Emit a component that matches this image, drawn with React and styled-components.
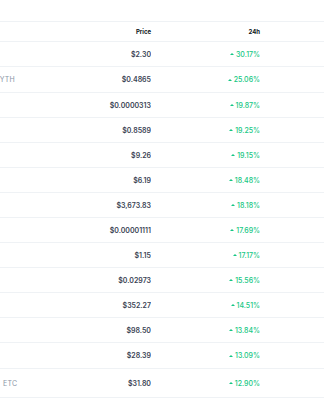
import React from "react";
import styled, { createGlobalStyle } from "styled-components";

const Global = createGlobalStyle`
  html, body { margin: 0; padding: 0; background: #ffffff; }
  body { font-family: Inter, "Noto Sans", "Liberation Sans", sans-serif; }
`;

const Viewport = styled.div`
  width: 324px;
  height: 400px;
  overflow: hidden;
  padding-top: 21px;
  box-sizing: border-box;
`;

const Table = styled.div`
  margin-left: -100px;
  width: 424px;
  display: grid;
  grid-template-columns: 190px 61px 109px 64px;
  border-top: 1px solid #eff2f5;
`;

const HeadCell = styled.div`
  height: 19px;
  border-bottom: 1px solid #eff2f5;
  display: flex;
  align-items: center;
  justify-content: ${(p) => (p.$right ? "flex-end" : "flex-start")};
  font-size: 6px;
  font-weight: 700;
  color: #0d1421;
`;

const Cell = styled.div`
  height: ${(p) => p.$h}px;
  border-bottom: 1px solid #eff2f5;
  display: flex;
  align-items: center;
  justify-content: ${(p) => (p.$right ? "flex-end" : "flex-start")};
  white-space: nowrap;
  overflow: hidden;
`;

const Name = styled.span`
  display: inline-block;
  width: ${(p) => p.$w}px;
  overflow: hidden;
  font-size: 7px;
  font-weight: 600;
  color: #0d1421;
`;

const Symbol = styled.span`
  font-size: 7px;
  font-weight: 400;
  color: #8a94a6;
  letter-spacing: 0.2px;
`;

const Price = styled.span`
  font-size: 7px;
  font-weight: 600;
  color: #3a4354;
`;

const Change = styled.span`
  display: inline-flex;
  align-items: center;
  gap: 2px;
  font-size: 7px;
  font-weight: 500;
  color: #16c784;
`;

const Caret = styled.span`
  display: inline-block;
  width: 0;
  height: 0;
  border-left: 2px solid transparent;
  border-right: 2px solid transparent;
  border-bottom: 2.5px solid #16c784;
`;

const rows = [
  { name: "Bittensor", sym: "TAO", price: "$2.30", chg: "30.17%", w: 50 },
  { name: "Pyth Network", sym: "PYTH", price: "$0.4865", chg: "25.06%", w: 95, h: 25 },
  { name: "Bonk", sym: "BONK", price: "$0.0000313", chg: "19.87%", w: 30 },
  { name: "Sei", sym: "SEI", price: "$0.8589", chg: "19.25%", w: 30 },
  { name: "Celestia", sym: "TIA", price: "$9.26", chg: "19.15%", w: 45 },
  { name: "NEAR Protocol", sym: "NEAR", price: "$6.19", chg: "18.48%", w: 70 },
  { name: "Ethereum", sym: "ETH", price: "$3,673.83", chg: "18.18%", w: 50 },
  { name: "Shiba Inu", sym: "SHIB", price: "$0.00001111", chg: "17.69%", w: 45 },
  { name: "Cardano", sym: "ADA", price: "$1.15", chg: "17.17%", w: 45 },
  { name: "VeChain", sym: "VET", price: "$0.02973", chg: "15.56%", w: 45 },
  { name: "BNB", sym: "BNB", price: "$352.27", chg: "14.51%", w: 30 },
  { name: "Solana", sym: "SOL", price: "$98.50", chg: "13.84%", w: 40 },
  { name: "Avalanche", sym: "AVAX", price: "$28.39", chg: "13.09%", w: 50, h: 25 },
  { name: "Ethereum Classic", sym: "ETC", price: "$31.80", chg: "12.90%", w: 103, h: 28 },
];

export default function App() {
  return (
    <>
      <Global />
      <Viewport>
        <Table>
          <HeadCell>Coin</HeadCell>
          <HeadCell $right>Price</HeadCell>
          <HeadCell $right>24h</HeadCell>
          <HeadCell />
          {rows.map((r) => {
            const h = r.h || 24;
            return (
              <React.Fragment key={r.sym}>
                <Cell $h={h}>
                  <Name $w={r.w}>{r.name}</Name>
                  <Symbol>{r.sym}</Symbol>
                </Cell>
                <Cell $h={h} $right>
                  <Price>{r.price}</Price>
                </Cell>
                <Cell $h={h} $right>
                  <Change>
                    <Caret />
                    {r.chg}
                  </Change>
                </Cell>
                <Cell $h={h} />
              </React.Fragment>
            );
          })}
        </Table>
      </Viewport>
    </>
  );
}
